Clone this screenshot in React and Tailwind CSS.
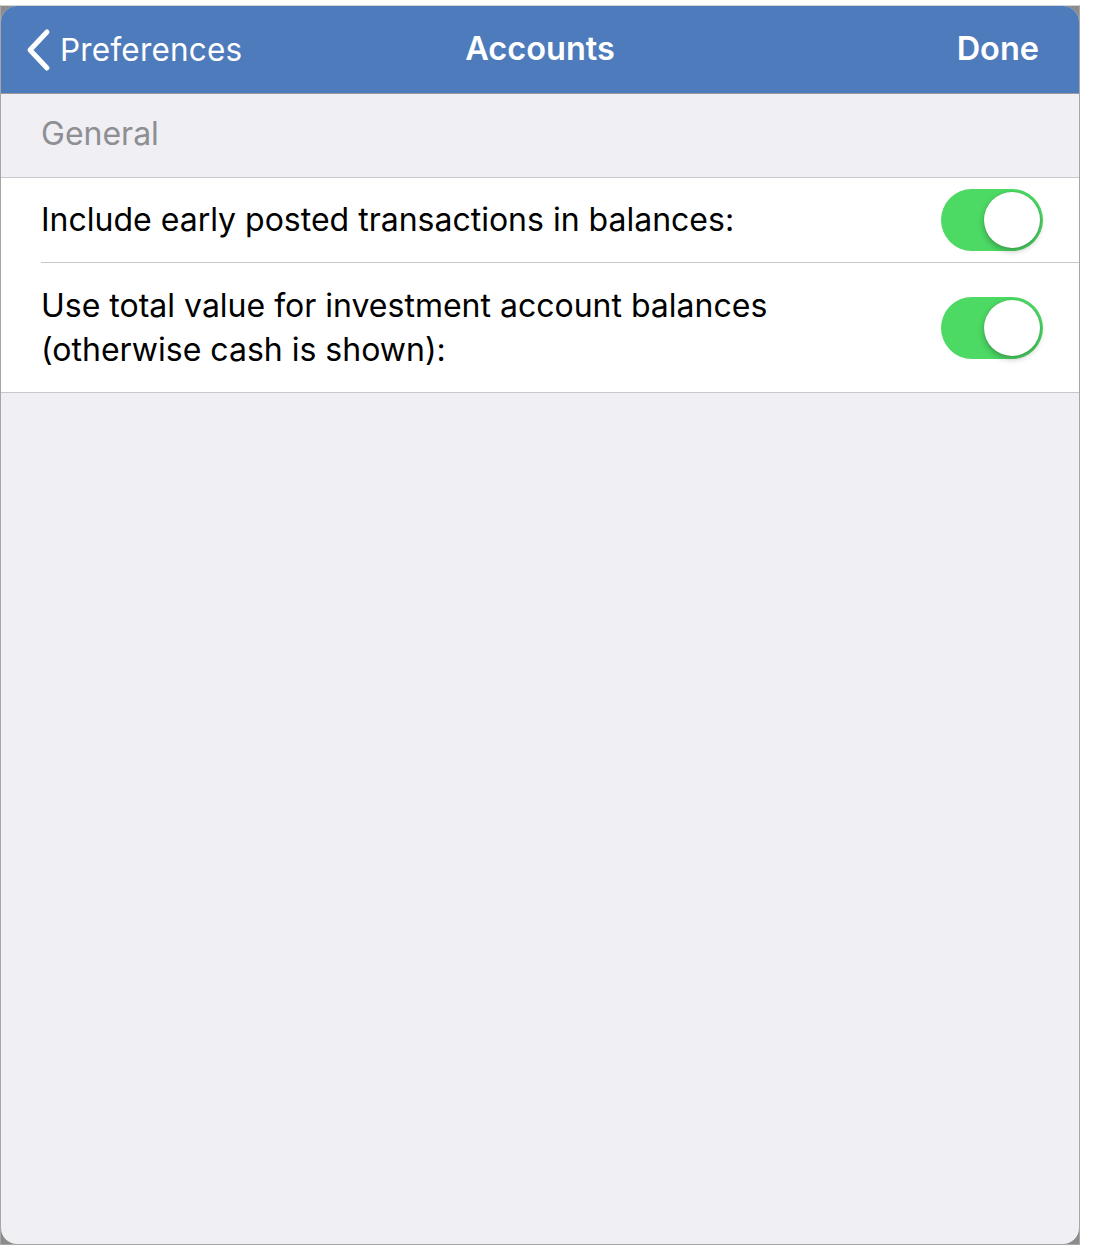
import { useState } from 'react'

function Toggle({ on, onChange }) {
  return (
    <button
      type="button"
      onClick={() => onChange(!on)}
      className={`relative w-[102px] h-[62px] rounded-full shrink-0 transition-colors ${on ? 'bg-[#4cd964]' : 'bg-[#e5e5ea]'}`}
    >
      <span
        className={`absolute top-[3px] w-[56px] h-[56px] rounded-full bg-white shadow-[0_3px_6px_rgba(0,0,0,0.28),0_0_1px_rgba(0,0,0,0.2)] transition-all ${on ? 'left-[43px]' : 'left-[3px]'}`}
      />
    </button>
  )
}

export default function App() {
  const [earlyPosted, setEarlyPosted] = useState(true)
  const [totalValue, setTotalValue] = useState(true)

  return (
    <div className="w-[1100px] h-[1250px] bg-white pt-[5px]" style={{ fontFamily: 'Inter, "Liberation Sans", sans-serif' }}>
      <div className="w-[1080px] h-[1240px] bg-[#8c8c8c] border-t border-t-[#d4d4d4] border-x border-b border-[#a6a6a6]">
        <div className="w-full h-full rounded-[16px] overflow-hidden bg-[#efeff4] flex flex-col">
          {/* nav bar */}
          <div className="h-[88px] bg-[#4e7bbb] border-b border-[#9a9a9a] flex items-center text-white shrink-0 relative">
            <button className="flex items-center pl-[24px] gap-[7px]">
              <svg width="28" height="44" viewBox="0 0 28 44" fill="none">
                <path d="M22 4 L5 22 L22 40" stroke="white" strokeWidth="5" strokeLinecap="round" strokeLinejoin="round" />
              </svg>
              <span className="text-[31.5px] tracking-[0.2px]">Preferences</span>
            </button>
            <div className="absolute left-1/2 -translate-x-1/2 text-[32.5px] font-semibold">Accounts</div>
            <button className="ml-auto pr-[40px] text-[32.5px] font-semibold">Done</button>
          </div>

          {/* section header */}
          <div className="h-[84px] flex items-end pl-[40px] pb-[19px] text-[32px] text-[#8e8e93] border-b border-[#c8c7cc] shrink-0">
            General
          </div>

          <div className="bg-white border-b border-[#c8c7cc] shrink-0">
            <div className="flex items-center h-[84px] pl-[40px] pr-[36px]">
              <span className="flex-1 text-[32px] text-black">Include early posted transactions in balances:</span>
              <Toggle on={earlyPosted} onChange={setEarlyPosted} />
            </div>
            <div className="ml-[40px] border-t border-[#c8c7cc]" />
            <div className="flex items-center h-[129px] pl-[40px] pr-[36px]">
              <span className="flex-1 text-[32px] leading-[44px] text-black">
                Use total value for investment account balances
                <br />
                (otherwise cash is shown):
              </span>
              <Toggle on={totalValue} onChange={setTotalValue} />
            </div>
          </div>

          <div className="flex-1" />
        </div>
      </div>
    </div>
  )
}
